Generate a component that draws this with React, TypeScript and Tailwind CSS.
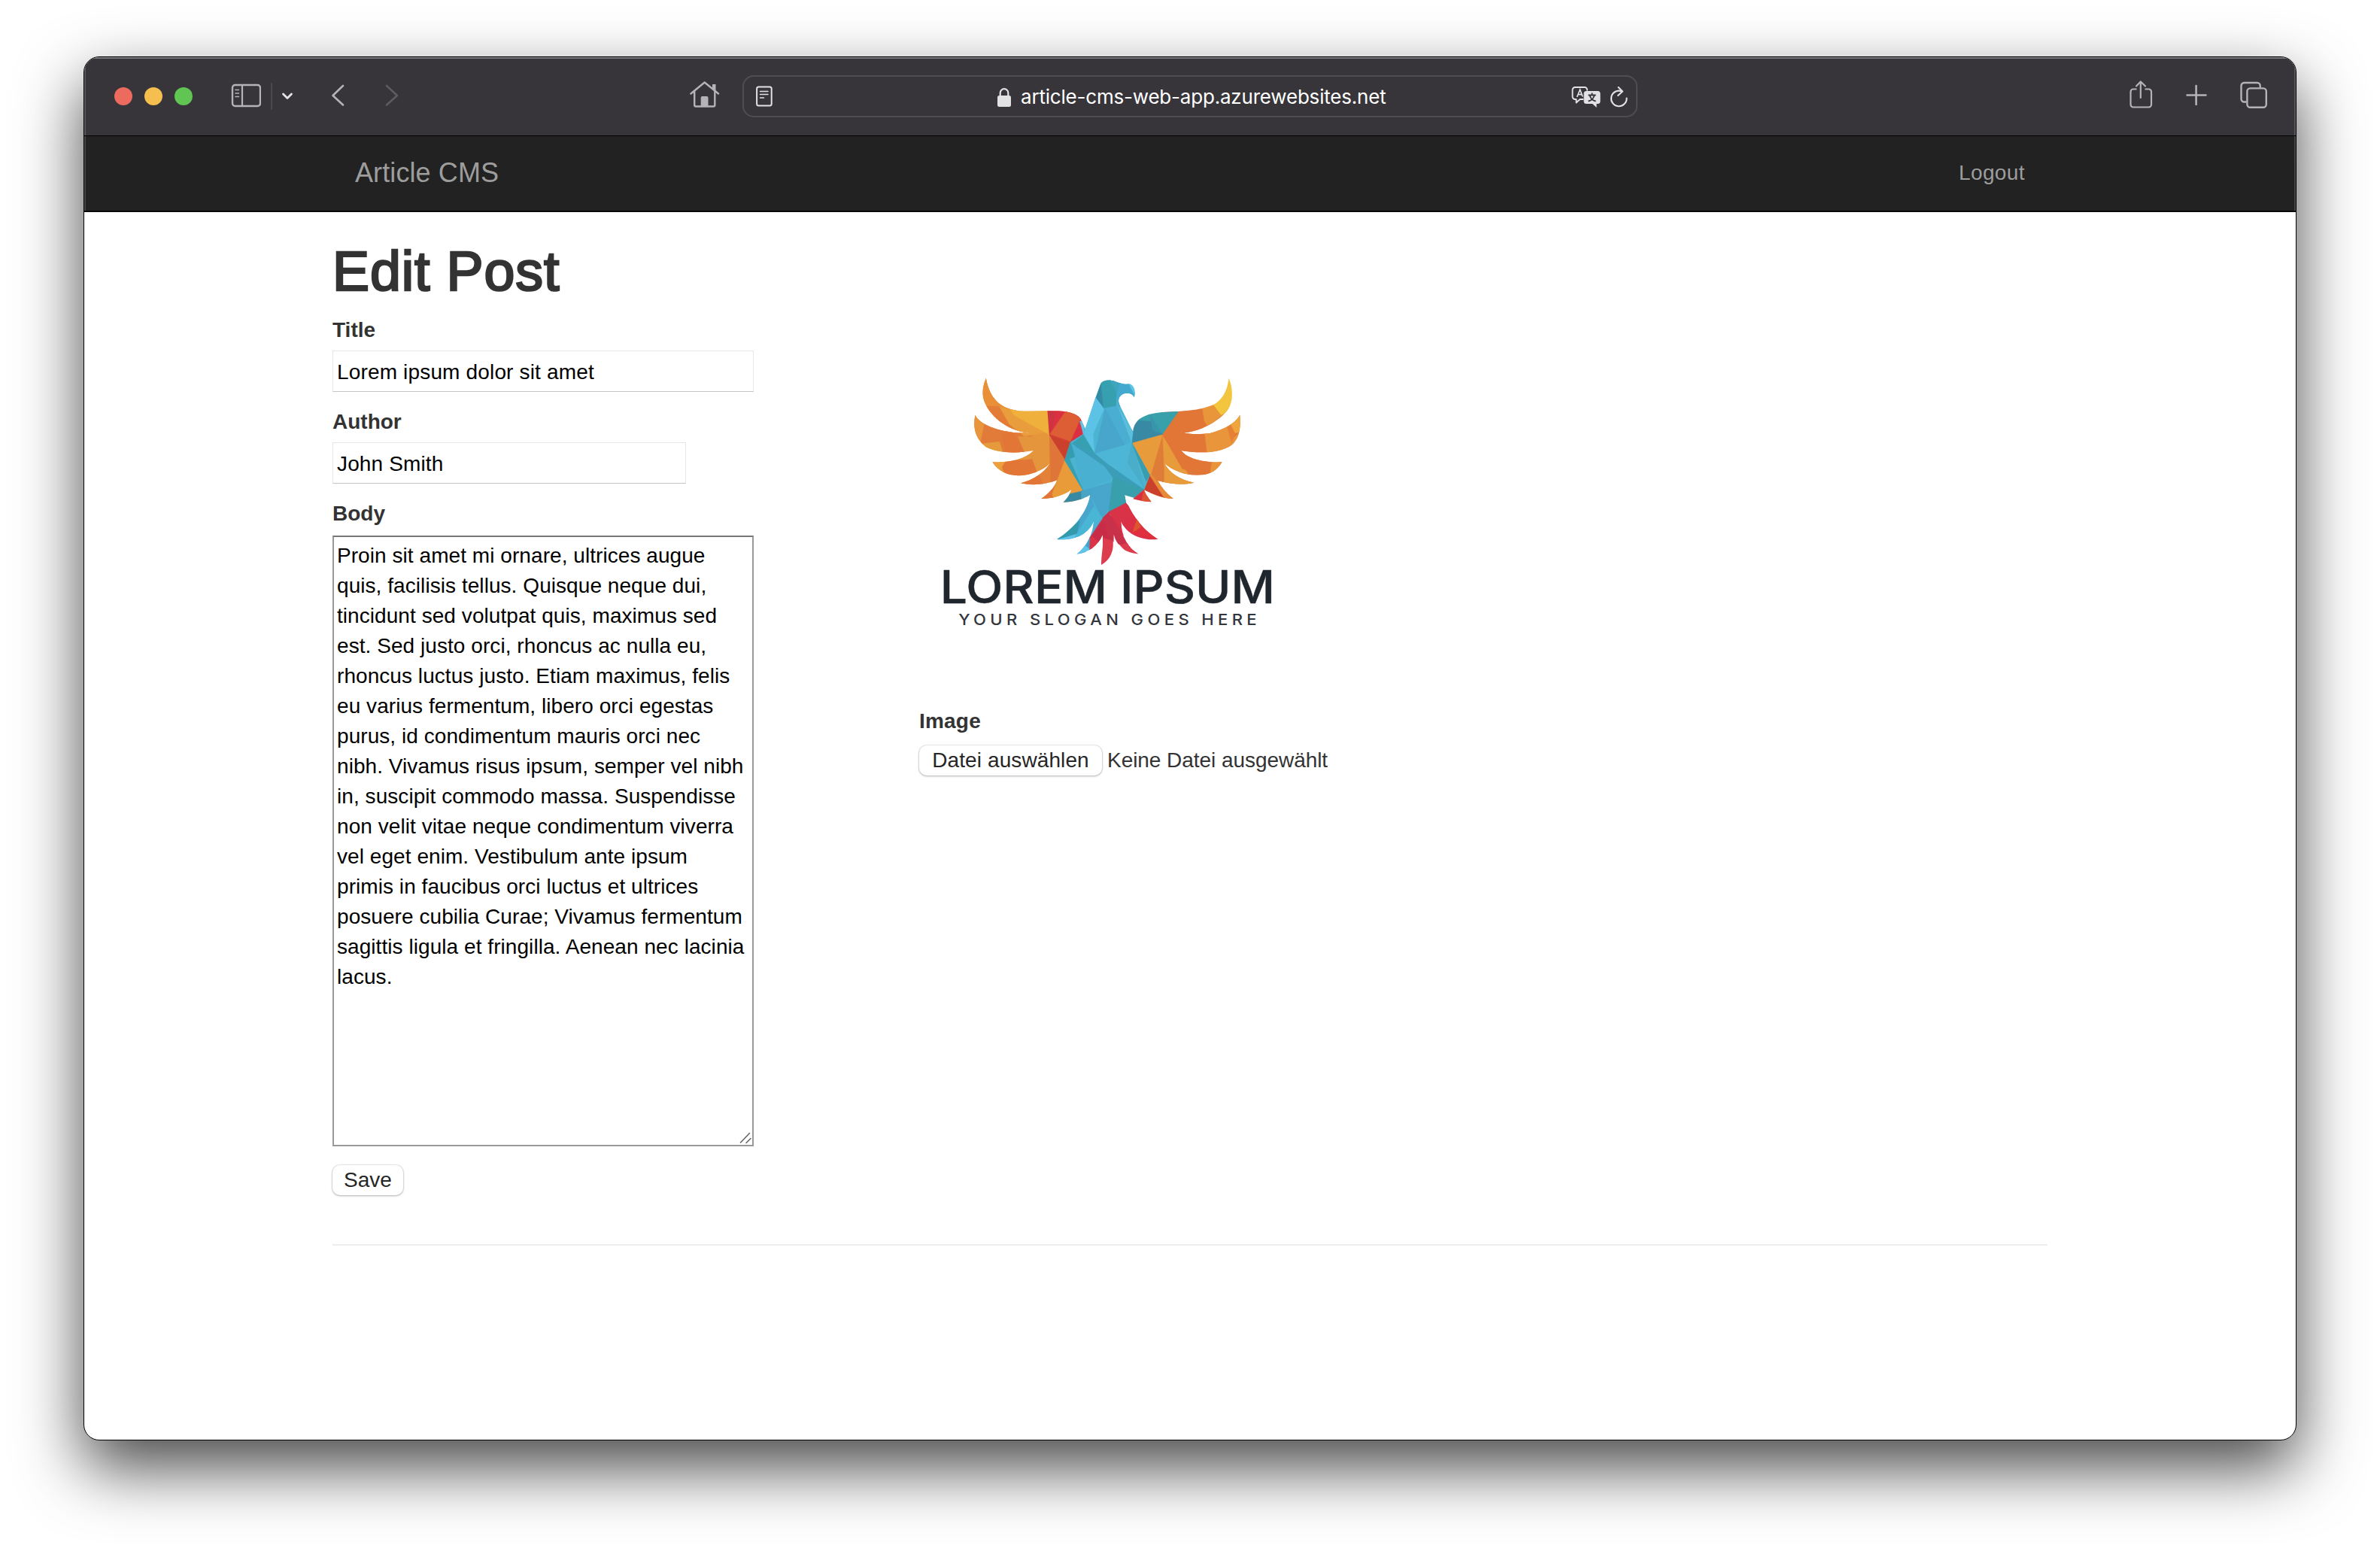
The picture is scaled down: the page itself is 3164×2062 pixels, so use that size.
import React from "react";

const BODY_TEXT = [
  "Proin sit amet mi ornare, ultrices augue",
  "quis, facilisis tellus. Quisque neque dui,",
  "tincidunt sed volutpat quis, maximus sed",
  "est. Sed justo orci, rhoncus ac nulla eu,",
  "rhoncus luctus justo. Etiam maximus, felis",
  "eu varius fermentum, libero orci egestas",
  "purus, id condimentum mauris orci nec",
  "nibh. Vivamus risus ipsum, semper vel nibh",
  "in, suscipit commodo massa. Suspendisse",
  "non velit vitae neque condimentum viverra",
  "vel eget enim. Vestibulum ante ipsum",
  "primis in faucibus orci luctus et ultrices",
  "posuere cubilia Curae; Vivamus fermentum",
  "sagittis ligula et fringilla. Aenean nec lacinia",
  "lacus.",
].join("\n");

const SILHOUETTE =
  "M322,128 C335,205 375,258 470,260 L600,259 C650,262 683,275 690,298 L705,330 L745,205 L765,150 C778,133 800,135 820,141 C840,149 850,153 870,151 C893,152 902,178 894,204 C886,188 870,186 855,190 C835,198 830,215 836,232 L889,342 C892,300 925,278 960,271 C1000,262 1040,262 1065,261 C1110,258 1160,252 1200,234 C1235,215 1255,175 1259,128 C1275,165 1275,210 1264,238 C1245,285 1160,340 1088,346 C1100,353 1160,353 1190,347 C1240,333 1285,308 1302,275 C1307,330 1298,370 1270,395 C1220,430 1140,428 1076,417 C1100,452 1170,466 1233,463 C1215,495 1190,510 1160,514 C1095,520 1050,500 1010,468 C1030,505 1070,535 1125,545 C1080,556 1030,550 984,536 C1000,565 1020,590 1045,609 C1000,607 965,592 932,573 C938,592 950,608 960,622 C920,620 885,612 857,594 C870,650 920,730 985,770 C930,778 865,755 843,698 C845,760 870,805 909,829 C860,825 828,800 815,752 C817,815 805,850 767,873 C765,840 777,800 772,752 C755,795 720,825 672,830 C710,800 735,750 738,698 C715,755 660,776 596,771 C660,730 715,660 724,594 C695,612 655,623 620,623 C635,610 646,590 652,572 C620,597 575,609 535,609 C560,592 585,568 597,535 C555,552 500,558 456,547 C500,535 545,508 569,468 C520,515 450,525 405,510 C380,502 360,485 347,463 C400,465 465,458 505,417 C450,428 370,430 322,403 C282,370 270,330 280,275 C300,320 400,352 492,346 C420,345 340,290 315,220 C303,185 313,150 322,128 Z";

const FACETS: [string, string][] = [
  // left wing
  ["#e5963c", "250,100 700,100 700,640 250,640"],
  ["#e98f38", "290,100 345,100 440,262 324,240 300,240"],
  ["#e27c37", "322,240 374,242 412,312 500,360 380,360 310,260"],
  ["#ea9d3c", "374,242 420,256 545,346 470,360 412,312"],
  ["#f0b03c", "415,252 560,258 562,352 430,276"],
  ["#e9953b", "270,260 318,300 312,392 280,390"],
  ["#e27a39", "318,300 440,350 470,425 388,425 372,380 300,392"],
  ["#e59a3c", "300,390 374,382 388,430 320,420"],
  ["#e17637", "384,350 430,350 470,430 400,430"],
  ["#ec9f3c", "340,455 400,458 384,490 360,490"],
  ["#e17637", "400,458 500,452 524,520 400,520 384,482"],
  ["#e38138", "524,500 568,470 568,356 572,540 540,555"],
  ["#e17637", "440,556 470,535 526,514 544,556"],
  ["#df7539", "568,356 632,452 570,610 572,500"],
  ["#e99b3a", "626,456 697,576 640,590 570,610"],
  ["#e17637", "530,615 568,574 582,606"],
  ["#db2f42", "560,250 690,250 697,355 648,384 568,356"],
  ["#cb3440", "560,258 590,262 568,352"],
  ["#dd5d35", "628,262 658,266 688,290 650,382 568,352"],
  ["#db3042", "688,290 697,352 648,384"],
  ["#ca402d", "568,356 648,384 628,454"],
  // right wing
  ["#e07639", "1000,250 1320,250 1320,640 950,640"],
  ["#e89b3b", "885,386 1000,352 1125,545 1045,612 950,516"],
  ["#df7d38", "1003,360 1012,570 960,512"],
  ["#e17637", "1003,352 1062,262 1160,255 1190,345 1190,520 1080,490"],
  ["#e89639", "1156,240 1200,234 1235,274 1180,322 1165,300"],
  ["#f3c53e", "1200,234 1250,110 1290,110 1280,250 1230,275"],
  ["#e9953b", "1166,345 1250,315 1278,365 1300,345 1280,430 1176,430"],
  ["#e58035", "1252,315 1268,305 1284,348 1270,385"],
  ["#f0a53c", "1265,308 1310,260 1310,340 1284,348"],
  ["#e8953a", "1195,455 1240,455 1230,500 1186,515"],
  ["#e89b3b", "1012,468 1070,510 1130,545 1010,560"],
  ["#ca402d", "952,512 1012,606 930,575"],
  ["#e68a37", "952,512 975,530 1045,610 1010,606"],
  ["#3889a3", "885,386 885,300 960,275 1003,352"],
  ["#38a0ab", "925,250 1064,262 1003,352 965,300 912,296"],
  ["#3995ac", "956,275 1003,352 965,335"],
  // body
  ["#4cb4d3", "690,290 745,120 840,130 840,240 889,340 885,386 954,515 932,573 857,594 862,626 770,690 724,594 697,576 626,456 648,384 697,352"],
  ["#62c4e8", "684,300 700,300 698,350"],
  ["#5dc3e6", "745,205 778,248 735,350 740,425 700,350 705,325"],
  ["#348aa5", "767,140 776,246 747,206"],
  ["#37a0b0", "764,130 800,130 826,150 824,240 776,248"],
  ["#3da6bc", "795,130 850,150 905,210 836,240 824,182"],
  ["#43a9cf", "838,145 880,148 905,210 836,240 826,200"],
  ["#5fc4e4", "872,148 905,155 905,210 889,182"],
  ["#48a5cc", "782,248 858,394 742,430"],
  ["#4aaed2", "782,248 830,238 880,378 858,394"],
  ["#5abfdc", "830,238 889,345 883,380"],
  ["#37a0b0", "697,355 742,430 655,388"],
  ["#359db0", "648,384 668,440 626,456"],
  ["#4ab0d2", "655,396 742,430 812,525 697,576 668,450"],
  ["#4db6d6", "742,430 885,386 922,562 780,470"],
  ["#3b9db8", "652,388 745,432 790,470 932,573 812,524 780,480"],
  ["#379daf", "885,386 954,515 940,540"],
  ["#4aadc9", "868,465 885,386 935,570"],
  ["#48a5cc", "697,576 808,544 795,650 770,690 724,594"],
  ["#399fac", "812,524 932,573 895,605 857,594 862,628 795,665"],
  ["#37a0b0", "626,456 640,440 697,576"],
  ["#3889a3", "615,630 645,590 697,578 690,612"],
  ["#4aa5c5", "690,576 724,580 724,600 690,620"],
  ["#db3042", "932,573 960,622 935,620 890,610"],
  ["#dd5530", "932,576 965,622 922,618"],
  // tail
  ["#4cb0d4", "724,594 770,690 725,770 700,840 580,775"],
  ["#48a5cc", "724,594 738,640 700,720 672,750 680,700"],
  ["#329aac", "684,696 672,750 590,775"],
  ["#60c3ea", "672,750 650,780 590,775"],
  ["#4ab6d5", "738,640 770,685 738,720 660,780 672,750"],
  ["#46a0c8", "724,760 730,806 700,815"],
  ["#60c3ea", "704,796 725,812 665,835"],
  ["#db3045", "862,626 1000,780 870,770 780,700"],
  ["#d93348", "795,662 862,626 888,672 840,730"],
  ["#c9314b", "776,682 795,662 870,790 915,835 815,780 722,766"],
  ["#db3448", "724,764 772,750 760,800 722,812"],
  ["#c82c46", "735,762 772,700 800,775 770,790"],
  ["#dd3b4e", "772,764 812,778 810,880 760,880"],
  ["#cf3048", "842,790 875,786 915,835"],
  ["#dd3c4c", "840,795 865,785 905,835 870,830"],
  ["#de5530", "888,745 905,690 922,726"],
  ["#e03040", "888,745 922,722 990,775"],
];

function Eagle() {
  return (
    <svg className="h-[400px] w-[500px] shrink-0" viewBox="64 0 1452 1200" preserveAspectRatio="none" aria-hidden="true">
      <defs>
        <clipPath id="eagle">
          <path d={SILHOUETTE} />
        </clipPath>
      </defs>
      <g clipPath="url(#eagle)">
        {FACETS.map(([fill, points], i) => (
          <polygon key={i} points={points} fill={fill} stroke={fill} strokeWidth="1.5" />
        ))}
      </g>
    </svg>
  );
}

function Toolbar() {
  return (
    <header className="flex h-[105px] shrink-0 items-start border-b border-black bg-[#37353a] text-[#b5b3b8] shadow-[inset_0_2px_0_#7a797c,inset_2px_0_0_#58575a,inset_-2px_0_0_#58575a]">
      <div className="mt-10 ml-10 flex gap-4">
        <span className="size-6 rounded-full bg-[#ed6a5e]" />
        <span className="size-6 rounded-full bg-[#f5bf4f]" />
        <span className="size-6 rounded-full bg-[#61c554]" />
      </div>
      <svg className="mt-[35px] ml-[51px] h-8 w-10" viewBox="0 0 40 32" fill="none" stroke="currentColor">
        <rect x="2" y="2" width="37" height="28" rx="3.5" strokeWidth="2.4" />
        <path d="M15 2v28" strokeWidth="2.2" />
        <path d="M6 8.500h4.500M6 13h4.500M6 17.500h4.500" strokeWidth="1.5" strokeLinecap="round" />
      </svg>
      <span className="mt-[34px] ml-[13px] h-9 w-0.5 bg-[#4a484d]" />
      <svg className="mt-[45px] ml-3 h-[14px] w-4 text-[#e4e3e5]" viewBox="0 0 16 14" fill="none" stroke="currentColor" strokeWidth="2.8" strokeLinecap="round" strokeLinejoin="round">
        <path d="M2.500 4l5.500 5.500L13.500 4" />
      </svg>
      <svg className="mt-9 ml-[50px] h-8 w-5" viewBox="0 0 20 32" fill="none" stroke="currentColor" strokeWidth="2.6" strokeLinecap="round" strokeLinejoin="round">
        <path d="M16 2L2.500 15L16 27.500" />
      </svg>
      <svg className="mt-9 ml-[51px] h-8 w-5 text-[#5d5b60]" viewBox="0 0 20 32" fill="none" stroke="currentColor" strokeWidth="2.6" strokeLinecap="round" strokeLinejoin="round">
        <path d="M3 2L17 15L3 27.500" />
      </svg>
      <svg className="mt-8 ml-[386px] h-9 w-10" viewBox="0 0 40 36" fill="none" stroke="currentColor" strokeWidth="2.400" strokeLinecap="round" strokeLinejoin="round">
        <path d="M1.500 16.500L19.700 1.500L38 16.500" />
        <path d="M6.200 13.500V31.500a2 2 0 0 0 2 2H31.300a2 2 0 0 0 2 -2V13.500" />
        <path d="M14.700 33V22a2 2 0 0 1 2 -2H22.500a2 2 0 0 1 2 2V33Z" fill="currentColor" stroke="none" />
        <path d="M30 4h4.500v9.500L30 9.700Z" fill="currentColor" stroke="none" />
      </svg>
      <div className="mt-6 ml-[30px] flex h-14 w-[1190px] items-start rounded-[15px] border-2 border-[#4f4d52] text-[#e2e1e3]">
        <svg className="mt-3 ml-4 h-7 w-[22px]" viewBox="0 0 22 28" fill="none" stroke="currentColor">
          <rect x="1.100" y="1.400" width="19.600" height="25" rx="2.500" strokeWidth="2" />
          <path d="M5.500 7.500h10.500M5.500 11.500h10.500M5.500 16h5" strokeWidth="1.500" strokeLinecap="round" />
        </svg>
        <svg className="mt-[15px] ml-[299px] h-[26px] w-[18px]" viewBox="0 0 18 26" fill="none" stroke="currentColor">
          <path d="M3.700 12V6.500a5.300 5.300 0 0 1 10.600 0V12" strokeWidth="2.200" />
          <rect x="0" y="10" width="18" height="15" rx="2.500" fill="currentColor" stroke="none" />
        </svg>
        <span className="mt-[9px] ml-[13px] w-[490px] font-[Inter] text-[26px] leading-9 tracking-[-0.2px] whitespace-nowrap text-white">
          article-cms-web-app.azurewebsites.net
        </span>
        <svg className="mt-[12px] ml-[242px] h-[30px] w-[40px]" viewBox="0 0 40 30" fill="none" stroke="currentColor">
          <path d="M16 18H11.500L6.500 22.500V18H5a3.500 3.500 0 0 1 -3.500 -3.500V5.500A3.500 3.500 0 0 1 5 2H17.500A3.500 3.500 0 0 1 21 5.500V6.500" strokeWidth="1.900" strokeLinejoin="round" />
          <path d="M7.500 15L11.500 5L15 14.500M9 11.700h5" strokeWidth="1.700" />
          <path d="M20 7H35a3.500 3.500 0 0 1 3.500 3.500V20.500A3.500 3.500 0 0 1 35 24H33.500V29L28 24H20a3.500 3.500 0 0 1 -3.500 -3.500V10.500A3.500 3.500 0 0 1 20 7Z" fill="currentColor" stroke="none" />
          <path d="M27.500 9.500V12M22.500 12.500H32.500M30.500 13C29.500 17 26 20 22.500 20.500M24.500 13C25.500 17 29 20 32.500 20.500" stroke="#37353a" strokeWidth="1.800" />
        </svg>
        <svg className="mt-[12px] ml-[11px] h-[30px] w-6" viewBox="0 0 24 30" fill="none" stroke="currentColor" strokeWidth="2.100" strokeLinecap="round" strokeLinejoin="round">
          <path d="M22.500 16.500A10.300 10.300 0 1 1 15.500 7.200" />
          <path d="M11.500 2L17 7.500L11 13" />
        </svg>
      </div>
      <svg className="mt-[30px] ml-[653px] h-10 w-8" viewBox="0 0 32 40" fill="none" stroke="currentColor" strokeWidth="2.200" strokeLinecap="round" strokeLinejoin="round">
        <path d="M10.500 12.500H6a3.500 3.500 0 0 0 -3.500 3.500V33A3.500 3.500 0 0 0 6 36.500H26.500A3.500 3.500 0 0 0 30 33V16a3.500 3.500 0 0 0 -3.500 -3.500H21.500" strokeLinecap="butt" />
        <path d="M15.800 24V2.500M10 8.500L15.800 2.500L22 8.500" />
      </svg>
      <svg className="mt-9 ml-[44px] h-7 w-7" viewBox="0 0 28 28" fill="none" stroke="currentColor" strokeWidth="2.600" strokeLinecap="round">
        <path d="M13.600 2V27M1.500 14.500H26.500" />
      </svg>
      <svg className="mt-[32px] ml-[44px] h-9 w-9" viewBox="0 0 36 36" fill="none" stroke="currentColor" strokeWidth="2.400">
        <rect x="9.400" y="9.400" width="25.400" height="25.400" rx="4" />
        <path d="M8.500 27.500H5.500A4 4 0 0 1 1.500 23.500V6A4 4 0 0 1 5.500 2H22.700A4 4 0 0 1 26.700 6V8.500" />
      </svg>
    </header>
  );
}

export default function App() {
  return (
    <div className="flex h-[2062px] w-[3164px] items-start justify-start overflow-hidden bg-white pt-[75px] pl-[111px] font-['Liberation_Sans',sans-serif] text-[28px] leading-10 text-[#333]">
      <div className="flex h-[1840px] w-[2942px] flex-col overflow-hidden rounded-[21px] border border-black bg-white shadow-[0_36px_86px_rgba(0,0,0,0.72)]">
        <Toolbar />
        <nav className="flex h-[101px] shrink-0 justify-between border-b-2 border-[#080808] bg-[#222] pr-[360px] pl-[360px] text-[#9d9d9d] shadow-[inset_2px_0_0_#464646,inset_-2px_0_0_#464646]">
          <a className="mt-[29px] text-[36px] tracking-[0.1px]">Article CMS</a>
          <a className="mt-[29px] tracking-[0.4px]">Logout</a>
        </nav>
        <main className="mx-[330px] flex flex-col">
          <h1 className="mt-[39px] h-[79px] text-[73.5px] leading-[80px] font-medium tracking-[0.9px] [-webkit-text-stroke:2.6px_#333]">Edit Post</h1>
          <div className="flex">
            <form className="flex w-[780px] flex-col items-start">
              <label className="mt-[19px] font-bold">Title</label>
              <input className="mt-[7px] h-[55px] w-[560px] border border-[#e6e6e6] border-b-[#c4c4c4] px-[5px] pt-[2px] tracking-[0.16px] text-black outline-none" defaultValue="Lorem ipsum dolor sit amet" />
              <label className="mt-5 font-bold">Author</label>
              <input className="mt-[7px] h-[55px] w-[470px] border border-[#e6e6e6] border-b-[#c4c4c4] px-[5px] pt-[2px] tracking-[0.13px] text-black outline-none" defaultValue="John Smith" />
              <label className="mt-5 font-bold">Body</label>
              <div className="relative mt-[9px] h-[812px] w-[560px]">
                <textarea className="block size-full resize-none overflow-hidden border-2 border-[#999] border-t-[#767676] px-1 py-[5px] tracking-[0.06px] whitespace-pre text-black outline-none" defaultValue={BODY_TEXT} />
                <svg className="absolute right-[3px] bottom-[3px] size-4" viewBox="0 0 16 16" stroke="#666" strokeWidth="1.600" strokeLinecap="round">
                  <path d="M1.500 14L13.500 1.500M9 14.500L15 8.500" />
                </svg>
              </div>
              <button type="button" className="mt-[25px] h-10 w-[94px] rounded-[10px] bg-white leading-10 text-[#262626] shadow-[0_0_1px_1px_rgba(0,0,0,0.08),0_1px_3px_rgba(0,0,0,0.26)]">Save</button>
            </form>
            <section className="flex flex-col items-start">
              <div className="flex h-[539px] w-[500px] flex-col items-center pt-[60px]">
                <Eagle />
                <span className="-mt-[112px] h-16 scale-x-[1.068] font-[Inter] text-[60px] leading-[64px] font-medium whitespace-nowrap text-[#20262e] [-webkit-text-stroke:0.4px_#20262e]">LOREM IPSUM</span>
                <span className="h-6 scale-x-[1.075] pl-[5px] font-[Inter] text-[20.5px] leading-6 font-medium tracking-[5px] whitespace-nowrap text-[#33363c]">YOUR SLOGAN GOES HERE</span>
              </div>
              <label className="font-bold tracking-[0.2px]">Image</label>
              <div className="mt-3 flex items-center gap-[7px]">
                <button type="button" className="h-10 w-[243px] rounded-[10px] bg-white leading-10 tracking-[0.1px] text-[#262626] shadow-[0_0_1px_1px_rgba(0,0,0,0.08),0_1px_3px_rgba(0,0,0,0.26)]">Datei auswählen</button>
                <span className="tracking-[-0.05px]">Keine Datei ausgewählt</span>
              </div>
            </section>
          </div>
          <hr className="mt-[65px] border-t-2 border-[#eee]" />
        </main>
      </div>
    </div>
  );
}
